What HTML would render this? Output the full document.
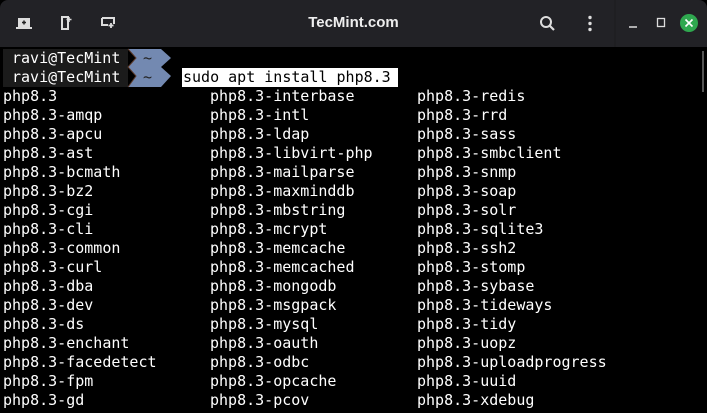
<!DOCTYPE html>
<html><head><style>
html,body{margin:0;padding:0;width:707px;height:413px;overflow:hidden;background:#000;}
.tb{position:absolute;left:0;top:0;width:707px;height:47px;background:#222226;border-radius:8px 8px 0 0;}
.title{position:absolute;left:0;width:707px;top:14px;text-align:center;color:#eee;font:bold 15px "Liberation Sans",sans-serif;}
.term{position:absolute;left:0;top:47px;width:707px;height:366px;background:#000;font:15px/19px "DejaVu Sans Mono",monospace;color:#fff;}
.l{position:absolute;white-space:pre;}
</style></head><body>
<div class="tb">
<svg width="707" height="47" style="position:absolute;left:0;top:0">
 <g fill="none" stroke="#ddd" stroke-width="2">
  <rect x="18" y="18" width="12" height="9" fill="#ddd" stroke="none"/>
  <path d="M16 28h16"/>
  <path d="M62 17h6v12h-6z"/>
  <path d="M102 18h12v6M102 18v7h6"/>
 </g>
 <path d="M22 22.5h4M24 20.5v4" stroke="#222" stroke-width="1.5"/>
 <path d="M69 17v5M66.5 19.5h5" stroke="#ddd" stroke-width="1.5"/>
 <path d="M111 23v5M108.5 25.5h5" stroke="#ddd" stroke-width="1.8"/>
 <circle cx="546" cy="22" r="5" fill="none" stroke="#ddd" stroke-width="2"/>
 <path d="M550 26l4 4" stroke="#ddd" stroke-width="2.2"/>
 <circle cx="590" cy="17.5" r="1.7" fill="#ddd"/><circle cx="590" cy="23.5" r="1.7" fill="#ddd"/><circle cx="590" cy="29.5" r="1.7" fill="#ddd"/>
 <path d="M615 0v47" stroke="#1c1c1f"/>
 <path d="M629 27h8" stroke="#ddd" stroke-width="1.5"/>
 <rect x="657.5" y="18.5" width="7" height="8" fill="none" stroke="#ddd" stroke-width="1.3"/>
 <circle cx="689" cy="23" r="9" fill="#2fa84f"/>
 <path d="M685.5 19.5l7 7M692.5 19.5l-7 7" stroke="#fff" stroke-width="1.6"/>
</svg>
<div class="title">TecMint.com</div>
</div>
<div class="term">
<svg width="707" height="45" style="position:absolute;left:0;top:0">
 <rect x="3" y="2" width="125" height="38" fill="#1b1b1b"/>
 <polygon points="128,2 161,2 171,11 161,20 171,29 161,40 128,40 136,29 128,20 136,11" fill="#7389b1"/>
 <path d="M128 2l8 9-8 9 8 9-8 11" stroke="#5b3a2a" fill="none"/>
 <rect x="182" y="21" width="216" height="19" fill="#fff"/>
 <rect x="702" y="4" width="2" height="362" fill="#555"/>
</svg>
<div class="l" style="left:12px;top:2px">ravi@TecMint</div>
<div class="l" style="left:12px;top:21px">ravi@TecMint</div>
<div class="l" style="left:143px;top:2px;color:#222">~</div>
<div class="l" style="left:143px;top:21px;color:#222">~</div>
<div class="l" style="left:183px;top:21px;color:#000">sudo apt install php8.3</div>
<div class="l" style="left:3px;top:40px">php8.3
php8.3-amqp
php8.3-apcu
php8.3-ast
php8.3-bcmath
php8.3-bz2
php8.3-cgi
php8.3-cli
php8.3-common
php8.3-curl
php8.3-dba
php8.3-dev
php8.3-ds
php8.3-enchant
php8.3-facedetect
php8.3-fpm
php8.3-gd</div>
<div class="l" style="left:210px;top:40px">php8.3-interbase
php8.3-intl
php8.3-ldap
php8.3-libvirt-php
php8.3-mailparse
php8.3-maxminddb
php8.3-mbstring
php8.3-mcrypt
php8.3-memcache
php8.3-memcached
php8.3-mongodb
php8.3-msgpack
php8.3-mysql
php8.3-oauth
php8.3-odbc
php8.3-opcache
php8.3-pcov</div>
<div class="l" style="left:417px;top:40px">php8.3-redis
php8.3-rrd
php8.3-sass
php8.3-smbclient
php8.3-snmp
php8.3-soap
php8.3-solr
php8.3-sqlite3
php8.3-ssh2
php8.3-stomp
php8.3-sybase
php8.3-tideways
php8.3-tidy
php8.3-uopz
php8.3-uploadprogress
php8.3-uuid
php8.3-xdebug</div>
</div>
</body></html>
